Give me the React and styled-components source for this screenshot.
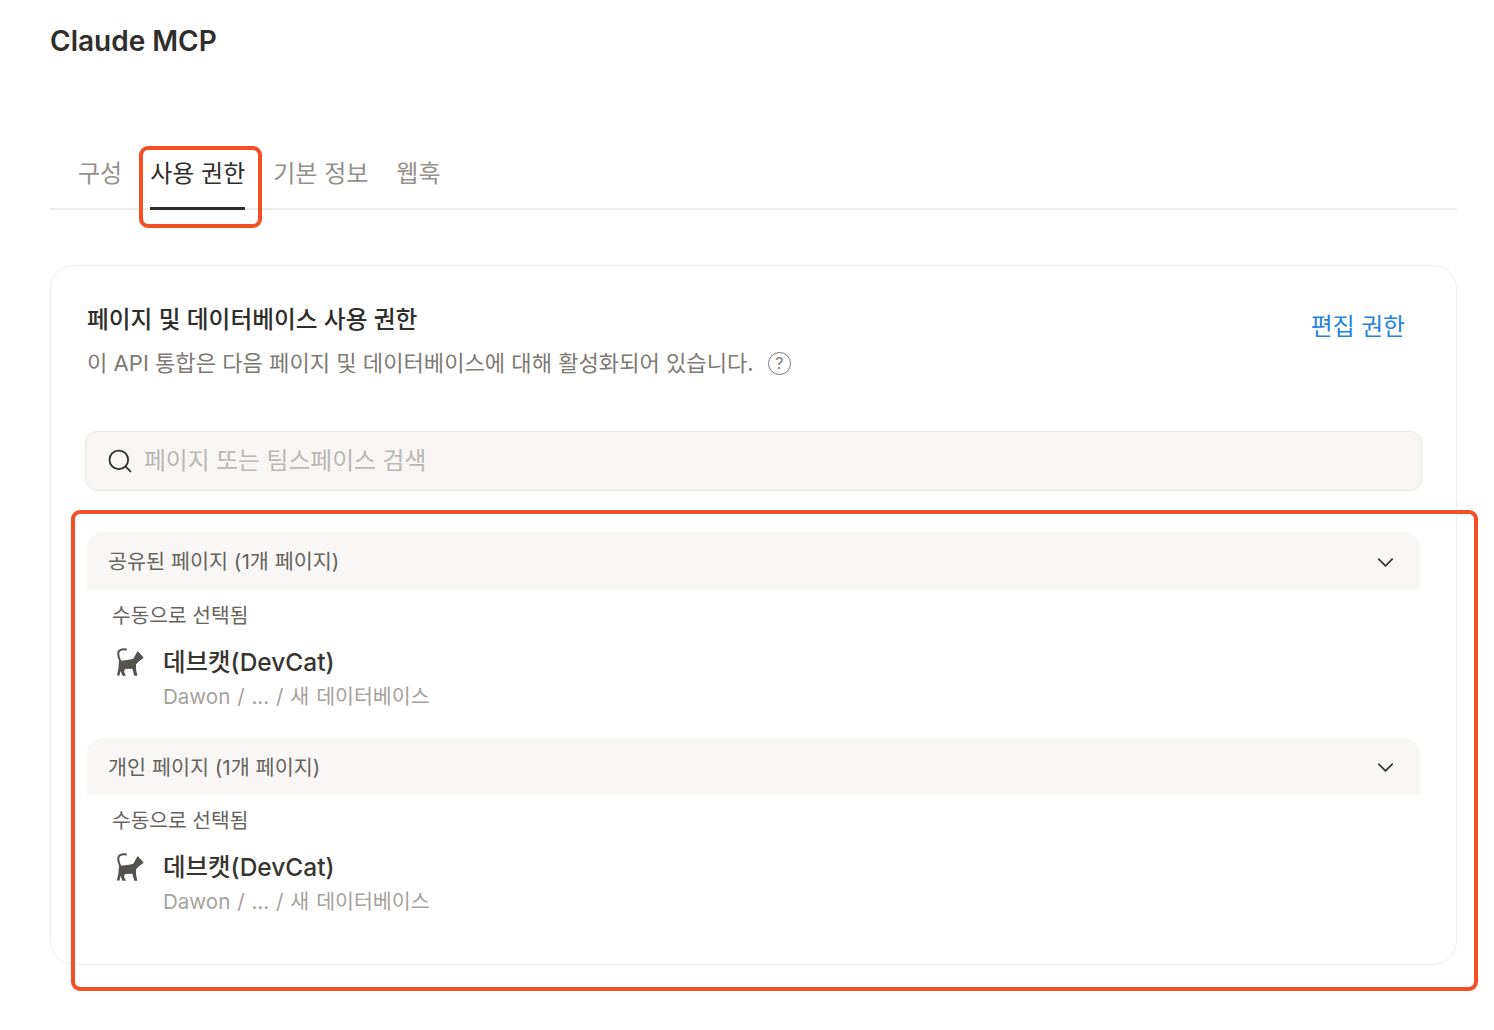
import React from "react";
import styled, { createGlobalStyle } from "styled-components";
import { Search, ChevronDown } from "lucide-react";

const GlobalStyle = createGlobalStyle`
  html, body {
    margin: 0;
    padding: 0;
    background: #ffffff;
    font-family: Inter, "Noto Sans CJK KR", sans-serif;
  }
`;

const CatIcon = () => (
  <CatSvg width="32" height="32" viewBox="0 0 32 32" fill="#55534e">
    <path
      d="M12 3.400C8 2.800 4.200 4 4.200 7.500c0 2.500.8 4.800 1.800 7"
      fill="none"
      stroke="#55534e"
      strokeWidth="2"
      strokeLinecap="round"
    />
    <path d="M5 14.500c4 .2 10-.6 14.300-1.800l4.400-7.700 3 3.300 3 3.400-4.400 3.300-3.300 3.300v5l1.300 6.500h-3l-2-7-7.300.2-1 2.700 2 4.100H8.500l-2-4.800-1 4.500H3l1.500-8z" />
  </CatSvg>
);

const sections = [
  { id: "shared", title: "공유된 페이지 (1개 페이지)", headHeight: 58 },
  { id: "private", title: "개인 페이지 (1개 페이지)", headHeight: 57 },
];

const App = () => (
  <Page>
    <GlobalStyle />
    <Title>Claude MCP</Title>
    <Tabs>
      <Tab>구성</Tab>
      <Tab $active>사용 권한</Tab>
      <Tab>기본 정보</Tab>
      <Tab>웹훅</Tab>
    </Tabs>
    <Card>
      <CardHead>
        <div>
          <CardTitle>페이지 및 데이터베이스 사용 권한</CardTitle>
          <CardDesc>
            이 API 통합은 다음 페이지 및 데이터베이스에 대해 활성화되어 있습니다.
            <HelpMark>?</HelpMark>
          </CardDesc>
        </div>
        <EditLink>편집 권한</EditLink>
      </CardHead>
      <SearchBox>
        <Search size={28} strokeWidth={1.5} color="#2b2b2b" />
        <SearchText>페이지 또는 팀스페이스 검색</SearchText>
      </SearchBox>
      {sections.map((section) => (
        <Section key={section.id}>
          <SectionHead $height={section.headHeight}>
            <SectionTitle>{section.title}</SectionTitle>
            <Chevron size={27} strokeWidth={1.5} color="#37352f" />
          </SectionHead>
          <SelectedLabel>수동으로 선택됨</SelectedLabel>
          <PageRow>
            <CatIcon />
            <div>
              <PageName>데브캣(DevCat)</PageName>
              <PagePath>Dawon / ... / 새 데이터베이스</PagePath>
            </div>
          </PageRow>
        </Section>
      ))}
    </Card>
    <TabMark />
    <ListMark />
  </Page>
);

export default App;

const Page = styled.div`
  position: relative;
  width: 1494px;
  height: 1030px;
  box-sizing: border-box;
  padding: 22px 37px 0 50px;
  overflow: hidden;
  color: #2f2e2b;
`;

const Title = styled.h1`
  margin: 0;
  font-size: 28px;
  line-height: 38px;
  font-weight: 600;
  color: #2f2e2b;
`;

const Tabs = styled.div`
  display: flex;
  gap: 28px;
  margin-top: 80px;
  padding-left: 28px;
  border-bottom: 2px solid #eeeeec;
  height: 68px;
`;

const Tab = styled.div`
  height: 70px;
  box-sizing: border-box;
  padding-top: 16px;
  font-size: 24px;
  line-height: 36px;
  white-space: nowrap;
  color: ${(p) => (p.$active ? "#2f2e2b" : "#94918a")};
  border-bottom: ${(p) => (p.$active ? "3px solid #2f2e2b" : "none")};
`;

const Card = styled.div`
  margin-top: 55px;
  height: 700px;
  box-sizing: border-box;
  border: 1px solid #eeeeec;
  border-radius: 24px;
  padding: 35px 34px 0 34px;
`;

const CardHead = styled.div`
  display: flex;
  justify-content: space-between;
  align-items: flex-start;
  padding: 0 17px 0 2px;
`;

const CardTitle = styled.div`
  font-size: 23.7px;
  line-height: 38px;
  font-weight: 500;
  color: #2f2e2b;
`;

const CardDesc = styled.div`
  display: flex;
  align-items: center;
  margin-top: 5px;
  font-size: 22.1px;
  line-height: 38px;
  color: #7d7a73;
`;

const HelpMark = styled.span`
  display: inline-flex;
  align-items: center;
  justify-content: center;
  width: 23px;
  height: 23px;
  box-sizing: border-box;
  margin-left: 14px;
  border: 1.5px solid #7d7a73;
  border-radius: 50%;
  font-size: 16px;
  line-height: 1;
`;

const EditLink = styled.div`
  margin-top: 7px;
  font-size: 23.8px;
  line-height: 38px;
  color: #2383e2;
`;

const SearchBox = styled.div`
  display: flex;
  align-items: center;
  gap: 10px;
  height: 60px;
  box-sizing: border-box;
  margin-top: 49px;
  padding: 0 20px;
  background: #f7f6f4;
  border: 1.5px solid #e9e8e5;
  border-radius: 12px;
`;

const SearchText = styled.span`
  margin-bottom: 6px;
  font-size: 23.75px;
  color: #bab8b3;
`;

const Section = styled.section`
  width: 1333px;
  margin: 41px 0 0 2px;
  & + & {
    margin-top: 27px;
  }
`;

const SectionHead = styled.div`
  display: flex;
  align-items: center;
  justify-content: space-between;
  height: ${(p) => p.$height}px;
  box-sizing: border-box;
  padding: 0 21px 0 21px;
  background: #f8f7f5;
  border-radius: 16px 16px 0 0;
  font-size: 20.7px;
  color: #65635d;
`;

const SectionTitle = styled.span`
  margin-bottom: 2px;
`;

const Chevron = styled(ChevronDown)`
  margin-top: 2px;
`;

const SelectedLabel = styled.div`
  margin: 10px 0 0 25px;
  font-size: 20.3px;
  line-height: 32px;
  color: #65635d;
`;

const PageRow = styled.div`
  display: flex;
  align-items: flex-start;
  gap: 17px;
  margin: 11px 0 0 27px;
`;

const CatSvg = styled.svg`
  flex: none;
  margin-top: 3px;
`;

const PageName = styled.div`
  font-size: 24.5px;
  line-height: 38px;
  font-weight: 500;
  color: #37352f;
`;

const PagePath = styled.div`
  margin-top: 2px;
  font-size: 20.55px;
  line-height: 28px;
  word-spacing: 1.1px;
  color: #a5a29c;
`;

const Mark = styled.div`
  position: absolute;
  box-sizing: border-box;
  border: 4px solid #f44e26;
  border-radius: 9px;
  pointer-events: none;
`;

const TabMark = styled(Mark)`
  left: 139px;
  top: 146px;
  width: 123px;
  height: 82px;
`;

const ListMark = styled(Mark)`
  left: 71px;
  top: 510px;
  width: 1407px;
  height: 481px;
`;
